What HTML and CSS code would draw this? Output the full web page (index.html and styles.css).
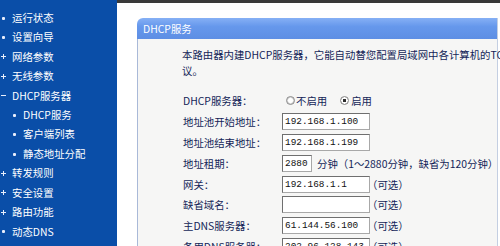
FILE: index.html
```html
<!DOCTYPE html>
<html lang="zh-CN">
<head>
<meta charset="utf-8">
<title>DHCP服务</title>
<link rel="stylesheet" href="styles.css">
</head>
<body>
<nav class="sidebar">
  <div class="item"><span class="dot"></span>运行状态</div>
  <div class="item"><span class="dot"></span>设置向导</div>
  <div class="item"><span class="plus"></span>网络参数</div>
  <div class="item"><span class="plus"></span>无线参数</div>
  <div class="item"><span class="minus"></span>DHCP服务器</div>
  <div class="item sub"><span class="dot"></span>DHCP服务</div>
  <div class="item sub"><span class="dot"></span>客户端列表</div>
  <div class="item sub"><span class="dot"></span>静态地址分配</div>
  <div class="item"><span class="plus"></span>转发规则</div>
  <div class="item"><span class="plus"></span>安全设置</div>
  <div class="item"><span class="plus"></span>路由功能</div>
  <div class="item"><span class="dot"></span>动态DNS</div>
</nav>
<main class="main">
  <section class="panel">
    <div class="panel-head">DHCP服务</div>
    <div class="panel-body">
      <p class="desc">本路由器内建DHCP服务器，它能自动替您配置局域网中各计算机的TCP/IP协<br>议。</p>
      <div class="form">
        <div class="label">DHCP服务器：</div>
        <div class="field">
          <span class="radio"></span><span class="rtext">不启用</span>
          <span class="radio checked"></span><span class="rtext">启用</span>
        </div>

        <div class="label">地址池开始地址：</div>
        <div class="field"><span class="input">192.168.1.100</span></div>

        <div class="label">地址池结束地址：</div>
        <div class="field"><span class="input">192.168.1.199</span></div>

        <div class="label">地址租期：</div>
        <div class="field"><span class="input short">2880</span><span class="note">分钟（1～2880分钟，缺省为120分钟）</span></div>

        <div class="label">网关：</div>
        <div class="field"><span class="input">192.168.1.1</span><span class="opt">（可选）</span></div>

        <div class="label">缺省域名：</div>
        <div class="field"><span class="input"></span><span class="opt">（可选）</span></div>

        <div class="label">主DNS服务器：</div>
        <div class="field"><span class="input">61.144.56.100</span><span class="opt">（可选）</span></div>

        <div class="label">备用DNS服务器：</div>
        <div class="field"><span class="input">202.96.128.143</span><span class="opt">（可选）</span></div>
      </div>
    </div>
  </section>
</main>
</body>
</html>
```
FILE: styles.css
```css
html, body {
  margin: 0;
  padding: 0;
}
body {
  width: 500px;
  height: 246px;
  overflow: hidden;
  display: flex;
  font-family: "Noto Sans CJK SC", "Noto Sans", sans-serif;
  font-size: 10.4px;
  background: #ffffff;
}

/* sidebar */
.sidebar {
  flex: none;
  width: 117px;
  height: 246px;
  background: #0a4ea8;
  padding-top: 8.3px;
  box-sizing: border-box;
  overflow: hidden;
  color: #ffffff;
}
.item {
  height: 19.45px;
  display: flex;
  align-items: center;
  white-space: nowrap;
  line-height: 1;
}
.item > span {
  flex: none;
  width: 12px;
  height: 7px;
  position: relative;
}
.item.sub {
  padding-left: 11px;
}
.dot::before {
  content: "";
  position: absolute;
  left: 2px;
  top: 2px;
  width: 3px;
  height: 3px;
  background: #e8eefc;
  border-radius: 1px;
}
.plus::before,
.plus::after,
.minus::before {
  content: "";
  position: absolute;
  background: #e8eefc;
}
.plus::before {
  left: 1px;
  top: 3px;
  width: 5px;
  height: 1px;
}
.plus::after {
  left: 3px;
  top: 1px;
  width: 1px;
  height: 5px;
}
.minus::before {
  left: 1px;
  top: 3px;
  width: 5px;
  height: 1px;
}

/* main */
.main {
  flex: none;
  width: 383px;
  height: 246px;
  box-sizing: border-box;
  border-top: 3px solid #3a3a3a;
  padding-top: 15px;
  padding-left: 20px;
  overflow: hidden;
  background: #ffffff;
}
.panel {
  width: 361px;
  height: 240px;
  display: flex;
  flex-direction: column;
  border-right: 1px solid #c4cfe2;
  box-sizing: border-box;
}
.panel-head {
  height: 21px;
  line-height: 21px;
  background: linear-gradient(#86b0f5, #6698ec 40%, #5d8ee4);
  border-radius: 6px 0 0 0;
  color: #ffffff;
  padding-left: 6px;
  white-space: nowrap;
}
.panel-body {
  flex: 1;
  background: #f6f6f5;
  border-left: 1px solid #a9b9d8;
  padding-left: 44px;
  color: #141f58;
}
.desc {
  margin: 0;
  padding-top: 8px;
  line-height: 16px;
  white-space: nowrap;
}
.form {
  margin-top: 11.6px;
  margin-left: 1px;
  display: grid;
  grid-template-columns: 99px auto;
  grid-auto-rows: 20.8px;
  align-items: center;
  white-space: nowrap;
}
.field {
  display: flex;
  align-items: center;
}
.input {
  box-sizing: border-box;
  width: 88px;
  height: 17px;
  background: #ffffff;
  border: 1px solid #6f6f6f;
  border-right-color: #a8a8a8;
  border-bottom-color: #a8a8a8;
  font-family: "Liberation Mono", "DejaVu Sans Mono", monospace;
  font-size: 9.4px;
  line-height: 15px;
  padding-left: 2px;
  color: #111111;
}
.input.short {
  width: 30px;
}
.note {
  margin-left: 5px;
}
.opt {
  margin-left: -3px;
}
.radio {
  box-sizing: border-box;
  width: 9px;
  height: 9px;
  border-radius: 50%;
  border: 1px solid #8c8c8c;
  background: radial-gradient(circle, #ffffff 0 45%, #d8d8d8 46% 100%);
  margin-left: 4px;
  margin-right: 1px;
}
.radio.checked {
  background: radial-gradient(circle, #2b2b2b 0 35%, #ffffff 40% 62%, #cfcfcf 66% 100%);
  margin-left: 13px;
  margin-right: 2px;
}
```
